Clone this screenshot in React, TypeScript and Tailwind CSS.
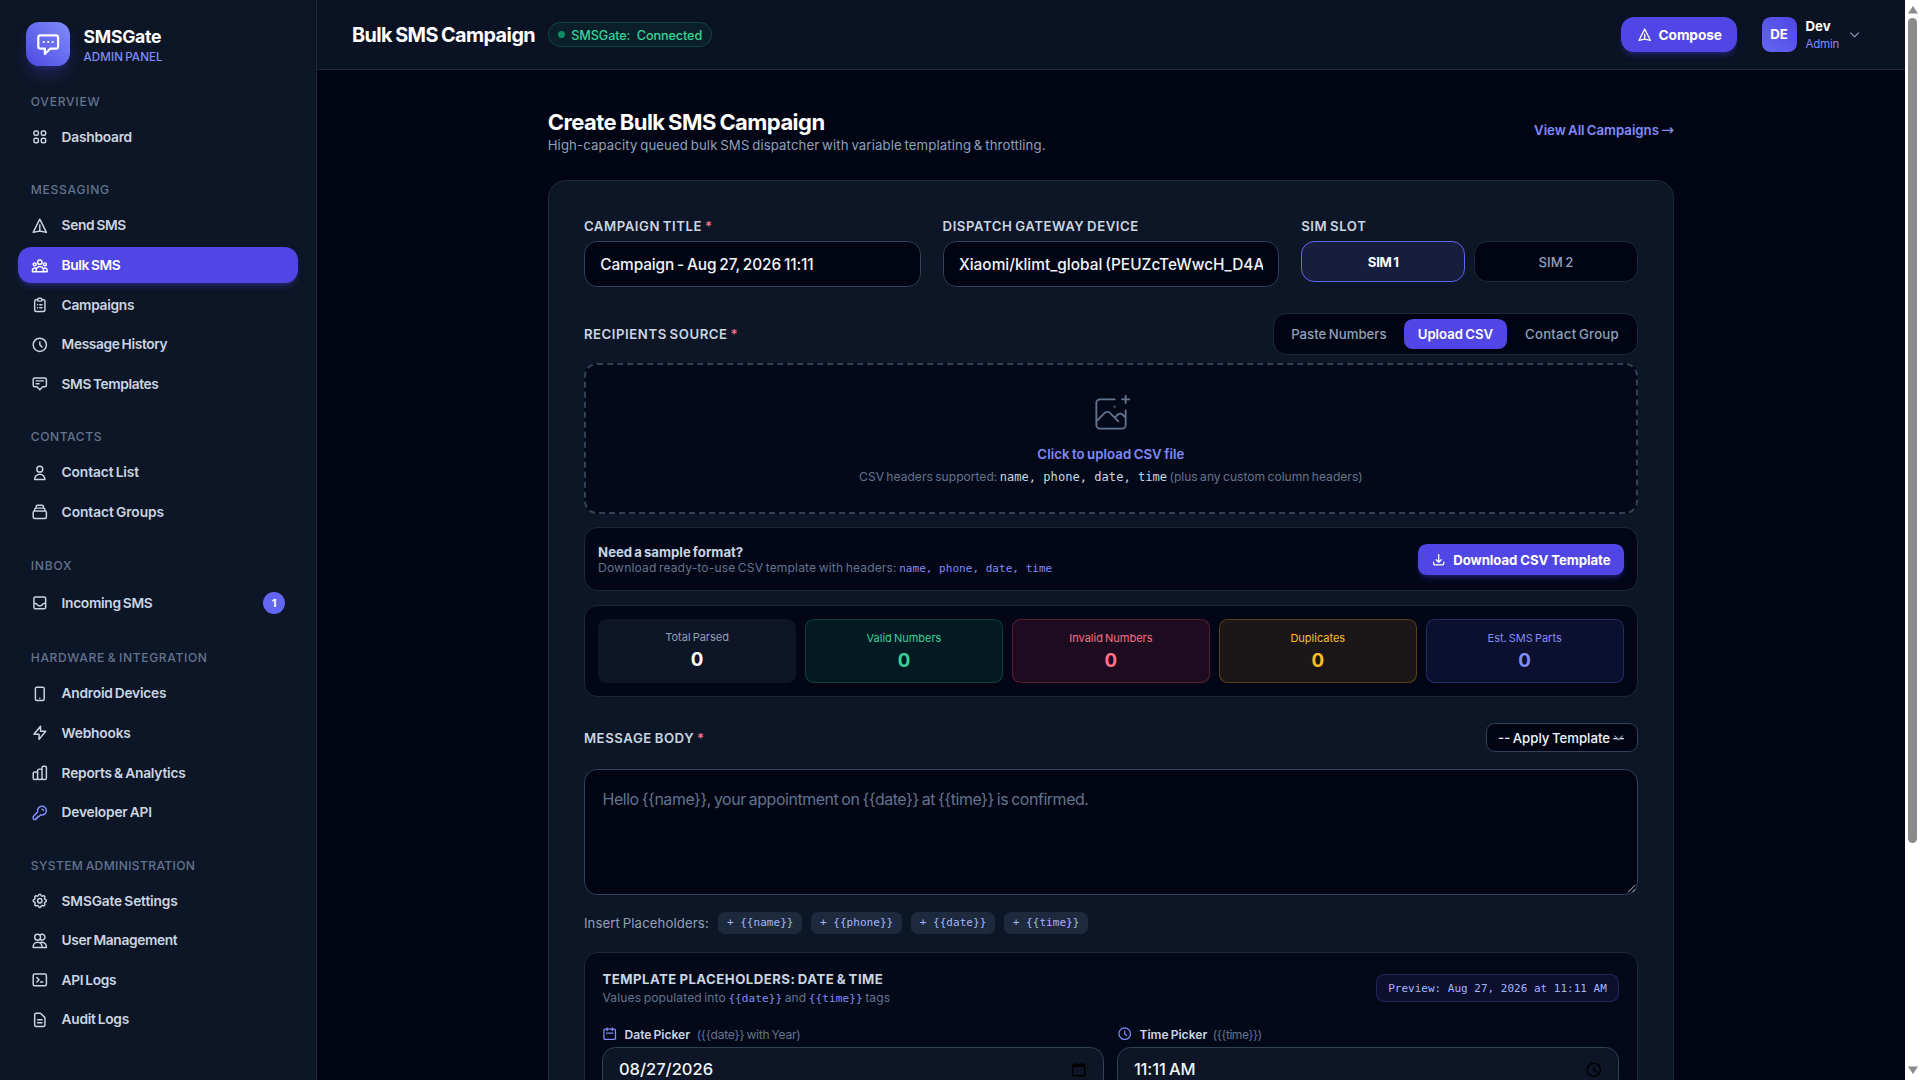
import type { ReactNode } from 'react'
import type { IconType } from 'react-icons'
import {
  HiOutlineAnnotation,
  HiOutlineCalendar,
  HiOutlineChartBar,
  HiOutlineChatAlt,
  HiOutlineChevronDown,
  HiOutlineClipboardList,
  HiOutlineClock,
  HiOutlineCog,
  HiOutlineCollection,
  HiOutlineDeviceMobile,
  HiOutlineDocumentText,
  HiOutlineDownload,
  HiOutlineInbox,
  HiOutlineKey,
  HiOutlineLightningBolt,
  HiOutlineTerminal,
  HiOutlineUser,
  HiOutlineUserGroup,
  HiOutlineUsers,
  HiOutlineViewGrid,
} from 'react-icons/hi'

function PlaneIcon({ className }: { className?: string }) {
  return (
    <svg className={className} fill="none" stroke="currentColor" strokeWidth={2} strokeLinecap="round" strokeLinejoin="round" viewBox="0 0 24 24">
      <path d="M12 19l9 2-9-18-9 18 9-2zm0 0v-8" />
    </svg>
  )
}

type Item = {
  label: string
  icon: IconType | typeof PlaneIcon
  track: string
  active?: boolean
  badge?: number
  tint?: string
}

const sections: { title: string; track: string; items: Item[] }[] = [
  {
    title: 'OVERVIEW',
    track: 'tracking-[0.67px]',
    items: [{ label: 'Dashboard', icon: HiOutlineViewGrid, track: 'tracking-[-0.22px]' }],
  },
  {
    title: 'MESSAGING',
    track: 'tracking-[0.65px]',
    items: [
      { label: 'Send SMS', icon: PlaneIcon, track: 'tracking-[-0.3px]' },
      { label: 'Bulk SMS', icon: HiOutlineUserGroup, track: 'tracking-[-0.35px]', active: true },
      { label: 'Campaigns', icon: HiOutlineClipboardList, track: 'tracking-[-0.25px]' },
      { label: 'Message History', icon: HiOutlineClock, track: 'tracking-[-0.33px]' },
      { label: 'SMS Templates', icon: HiOutlineAnnotation, track: 'tracking-[-0.35px]' },
    ],
  },
  {
    title: 'CONTACTS',
    track: 'tracking-[0.5px]',
    items: [
      { label: 'Contact List', icon: HiOutlineUser, track: 'tracking-[-0.1px]' },
      { label: 'Contact Groups', icon: HiOutlineCollection, track: 'tracking-[-0.06px]' },
    ],
  },
  {
    title: 'INBOX',
    track: 'tracking-[0.7px]',
    items: [{ label: 'Incoming SMS', icon: HiOutlineInbox, track: 'tracking-[-0.28px]', badge: 1 }],
  },
  {
    title: 'HARDWARE & INTEGRATION',
    track: 'tracking-[0.57px]',
    items: [
      { label: 'Android Devices', icon: HiOutlineDeviceMobile, track: 'tracking-[-0.22px]' },
      { label: 'Webhooks', icon: HiOutlineLightningBolt, track: 'tracking-[-0.16px]' },
      { label: 'Reports & Analytics', icon: HiOutlineChartBar, track: 'tracking-[-0.2px]' },
      { label: 'Developer API', icon: HiOutlineKey, track: 'tracking-[-0.19px]', tint: 'text-[#818cf8]' },
    ],
  },
  {
    title: 'SYSTEM ADMINISTRATION',
    track: 'tracking-[0.32px]',
    items: [
      { label: 'SMSGate Settings', icon: HiOutlineCog, track: 'tracking-[-0.14px]' },
      { label: 'User Management', icon: HiOutlineUsers, track: 'tracking-[-0.32px]' },
      { label: 'API Logs', icon: HiOutlineTerminal, track: 'tracking-[-0.3px]' },
      { label: 'Audit Logs', icon: HiOutlineDocumentText, track: 'tracking-[-0.25px]' },
    ],
  },
]

const stats = [
  { label: 'Total Parsed', box: 'bg-[#0d1526] pt-2', title: 'text-slate-400', value: 'text-white' },
  { label: 'Valid Numbers', box: 'border border-[#10b981]/25 bg-[#041a22] pt-2', title: 'text-[#34d399]', value: 'text-[#34d399]' },
  { label: 'Invalid Numbers', box: 'border border-[#f43f5e]/30 bg-[#1d0c20] pt-2', title: 'text-[#fb7185]', value: 'text-[#fb7185]' },
  { label: 'Duplicates', box: 'border border-[#f59e0b]/30 bg-[#1b1719] pt-2', title: 'text-[#fbbf24]', value: 'text-[#fbbf24]' },
  { label: 'Est. SMS Parts', box: 'border border-[#6366f1]/30 bg-[#0c102f] pt-2', title: 'text-[#818cf8]', value: 'text-[#818cf8]' },
]

const placeholders = ['name', 'phone', 'date', 'time']

const mono = "font-['DejaVu_Sans_Mono',monospace] [word-spacing:0]"

function Sidebar() {
  return (
    <aside className="w-72 shrink-0 border-r border-slate-800 bg-[#0d1626]">
      <div className="flex items-center gap-3 px-6 pt-5">
        <div className="flex size-10 items-center justify-center rounded-xl bg-linear-to-tr from-[#4f46e5] to-[#818cf8] shadow-lg shadow-[#4f46e5]/30">
          <HiOutlineChatAlt className="size-6 text-white" />
        </div>
        <div className="h-10 pt-[4px]">
          <div className="text-base/5 font-bold tracking-[-0.26px] text-white">SMSGate</div>
          <div className="mt-px text-[10.5px]/4 font-medium tracking-[0.1px] text-[#818cf8]">ADMIN PANEL</div>
        </div>
      </div>

      <nav className="flex flex-col gap-6 px-4 pt-[24.5px]">
        {sections.map((section) => (
          <div key={section.title}>
            <div className={`mb-[7.3px] px-3 text-[11px]/[16.7px] font-medium text-slate-500 ${section.track}`}>{section.title}</div>
            <div className="flex flex-col gap-[3.5px]">
              {section.items.map(({ label, icon: Icon, track, active, badge, tint }) => (
                <div
                  key={label}
                  className={`flex items-center gap-3 rounded-xl px-3 text-[12.5px] font-semibold ${badge ? 'h-[36.5px]' : 'h-[32.5px]'} ${
                    active ? 'bg-[#4f46e5] text-white shadow-md shadow-[#4f46e5]/30' : 'text-slate-300'
                  }`}
                >
                  <Icon className={`size-4 ${tint ?? ''}`} />
                  <span className={track}>{label}</span>
                  {badge && (
                    <span className="ml-auto flex size-5 items-center justify-center rounded-full bg-[#6366f1] text-[10px] font-bold text-white">
                      {badge}
                    </span>
                  )}
                </div>
              ))}
            </div>
          </div>
        ))}
      </nav>
    </aside>
  )
}

function Header() {
  return (
    <header className="flex h-16 shrink-0 items-center border-b border-slate-800 bg-[#0a1223] px-8">
      <h2 className="pt-0.5 text-lg font-bold tracking-[-0.5px] text-white">Bulk SMS Campaign</h2>
      <div className="ml-3 flex h-[23px] items-center rounded-full border border-[#10b981]/25 bg-[#0b1f2a] px-2 text-[11.5px] font-medium text-[#34d399]">
        <span className="mr-1.5 size-1.5 rounded-full bg-[#10b981]/70" />
        <span className="pt-[3px] tracking-[-0.1px] [word-spacing:0]">SMSGate:&nbsp; Connected</span>
      </div>
      <button className="ml-auto flex h-8 items-center gap-1.5 rounded-xl bg-[#4f46e5] px-3.5 text-[12.5px] font-bold text-white shadow-md shadow-[#4f46e5]/30">
        <PlaneIcon className="size-3.5" />
        <span className="pt-0.5 tracking-[-0.1px]">Compose</span>
      </button>
      <div className="mr-[7.5px] ml-[22px] flex items-center">
        <div className="flex size-8 items-center justify-center rounded-lg bg-linear-to-tr from-[#6366f1] to-[#4f46e5] pt-px text-xs font-bold text-white">DE</div>
        <div className="ml-2 w-[34px] pt-0.5">
          <div className="text-xs/4 font-bold text-white">Dev</div>
          <div className="text-[10.5px]/4 tracking-[-0.2px] text-[#818cf8]">Admin</div>
        </div>
        <HiOutlineChevronDown className="ml-[5px] size-3 text-slate-400" />
      </div>
    </header>
  )
}

function Label({ children, required }: { children: ReactNode; required?: boolean }) {
  return (
    <div className="h-4 pt-px text-xs/4 font-semibold tracking-[0.5px] text-slate-300">
      {children}
      {required && <span className="text-[#fb7185]"> *</span>}
    </div>
  )
}

function TopFields() {
  const field = 'mt-1.5 flex h-[41.8px] items-center rounded-xl border border-slate-700 bg-[#010413] px-3.5 pt-0.5 text-sm font-medium text-slate-100'
  return (
    <div className="grid grid-cols-3 gap-5">
      <div>
        <Label required>CAMPAIGN TITLE</Label>
        <div className={field}>
          <span className="tracking-[-0.1px]">Campaign - Aug 27, 2026 11:11</span>
        </div>
      </div>
      <div className="min-w-0">
        <Label>DISPATCH GATEWAY DEVICE</Label>
        <div className={field}>
          <span className="overflow-hidden whitespace-nowrap">Xiaomi/klimt_global (PEUZcTeWwcH_D4A</span>
        </div>
      </div>
      <div>
        <Label>SIM SLOT</Label>
        <div className="mt-1.5 grid grid-cols-2 gap-2 text-xs">
          <div className="flex h-[37.8px] items-center justify-center rounded-xl border border-[#6366f1] bg-[#171d3c] pt-0.5 font-bold tracking-[-0.3px] text-white">SIM 1</div>
          <div className="flex h-[37.8px] items-center justify-center rounded-xl border border-slate-800 bg-[#010413] pt-0.5 font-medium text-slate-400">SIM 2</div>
        </div>
      </div>
    </div>
  )
}

function Recipients() {
  return (
    <div className="mt-6">
      <div className="mb-2 flex items-center justify-between">
        <Label required>RECIPIENTS SOURCE</Label>
        <div className="flex h-[37.8px] items-center gap-1 rounded-xl border border-slate-800 bg-[#010413] p-1 text-xs font-medium text-slate-400">
          <span className="w-[110px] pt-0.5 text-center">Paste Numbers</span>
          <span className="flex h-[27.5px] w-[94px] items-center justify-center rounded-lg bg-[#4f46e5] pt-0.5 font-semibold text-white">Upload CSV</span>
          <span className="w-[110px] pt-0.5 text-center tracking-[0.2px]">Contact Group</span>
        </div>
      </div>

      <div className="flex h-[137px] flex-col items-center rounded-xl border-2 border-dashed border-slate-700 bg-[#040919] pt-6">
        <svg className="size-10 text-slate-500" fill="none" stroke="currentColor" strokeWidth={2} strokeLinecap="round" strokeLinejoin="round" viewBox="0 0 48 48">
          <path d="M28 8H12a4 4 0 00-4 4v20m32-12v8m0 0v8a4 4 0 01-4 4H12a4 4 0 01-4-4v-4m32-4l-3.172-3.172a4 4 0 00-5.656 0L28 28M8 32l9.172-9.172a4 4 0 015.656 0L28 28m0 0l4 4m4-24h8m-4-4v8m-12 4h.02" />
        </svg>
        <div className="mt-[8.5px] text-xs/[18px] font-semibold tracking-[0.08px] text-[#818cf8]">Click to upload CSV file</div>
        <div className="mt-[2.7px] text-[11px]/4 text-slate-500">
          CSV headers supported: <span className={`${mono} text-slate-300`}>name, phone, date, time</span> (plus any custom column headers)
        </div>
      </div>

      <div className="mt-3 flex h-[58.3px] items-center justify-between rounded-xl border border-slate-800 bg-[#020616] px-3">
        <div className="pt-px">
          <div className="text-xs/[15px] font-bold text-slate-300">Need a sample format?</div>
          <div className="text-[11px]/[14px] tracking-[0.12px] text-slate-500">
            Download ready-to-use CSV template with headers: <span className={`${mono} text-[10px] tracking-[0.03px] text-[#818cf8]`}>name, phone, date, time</span>
          </div>
        </div>
        <button className="flex h-7 items-center gap-1.5 rounded-lg bg-[#4f46e5] px-3 text-xs font-bold text-white shadow-md shadow-[#4f46e5]/30">
          <HiOutlineDownload className="size-3.5" />
          <span className="pt-0.5 tracking-[-0.07px]">Download CSV Template</span>
        </button>
      </div>

      <div className="mt-[12.5px] grid grid-cols-5 gap-2 rounded-xl border border-slate-800 bg-[#020616] p-3 text-center">
        {stats.map((s) => (
          <div key={s.label} className={`h-[57.5px] rounded-lg px-2 ${s.box}`}>
            <div className={`text-[10px]/[17px] ${s.title}`}>{s.label}</div>
            <div className={`text-[17px]/6 font-bold ${s.value}`}>0</div>
          </div>
        ))}
      </div>
    </div>
  )
}

function MessageBody() {
  return (
    <div className="mt-6">
      <div className="flex items-center justify-between">
        <Label required>MESSAGE BODY</Label>
        <div className="relative flex h-[26px] w-[138px] items-center rounded-lg border border-slate-700 bg-[#010413] px-2.5 pt-0.5 text-xs font-medium text-slate-100">
          <span className="whitespace-nowrap">-- Apply Template --</span>
          <HiOutlineChevronDown className="absolute top-[6px] right-[11px] size-3 text-slate-400" />
        </div>
      </div>
      <div className="relative mt-4 h-[113.8px] rounded-xl border border-slate-700 bg-[#010413] px-4 pt-[15px]">
        <p className="text-[14.5px]/6 tracking-[-0.4px] text-slate-500">{'Hello {{name}}, your appointment on {{date}} at {{time}} is confirmed.'}</p>
        <svg className="absolute right-px bottom-px size-2 text-slate-300" viewBox="0 0 8 8" stroke="currentColor" strokeWidth={0.8}>
          <path d="M1 7.5L7.5 1M5 7.5L7.5 5" />
        </svg>
      </div>
      <div className="mt-4 flex items-center gap-2 text-xs text-slate-400">
        <span className="w-[114px] pt-px tracking-[0.1px] whitespace-nowrap">Insert Placeholders:</span>
        {placeholders.map((p) => (
          <span key={p} className={`${mono} flex h-5 items-center rounded-md bg-slate-800 px-2 text-[10px] tracking-[0.04px] text-[#a5b4fc]`}>
            {`+ {{${p}}}`}
          </span>
        ))}
      </div>
    </div>
  )
}

function DateTime() {
  const field = 'mt-[3.7px] flex h-[41.5px] items-center justify-between rounded-xl border border-slate-700 bg-[#0d1526] px-3.5 pb-px text-[15px] font-medium text-slate-100'
  return (
    <div className="mt-[16.2px] rounded-xl border border-slate-800 bg-[#040919] p-4">
      <div className="flex h-8 items-center justify-between">
        <div className="pt-0.5">
          <div className="text-xs/4 font-bold tracking-[0.43px] text-slate-300">TEMPLATE PLACEHOLDERS: DATE &amp; TIME</div>
          <div className="text-[11px]/4 tracking-[0.1px] text-slate-500">
            Values populated into <span className={`${mono} text-[10px] text-[#818cf8]`}>{'{{date}}'}</span> and{' '}
            <span className={`${mono} text-[10px] text-[#818cf8]`}>{'{{time}}'}</span> tags
          </div>
        </div>
        <div className={`${mono} flex h-[26px] items-center rounded-lg border border-[#6366f1]/25 bg-[#0c102c] px-[10.5px] pt-0.5 text-[10px] text-[#a5b4fc]`}>
          Preview: Aug 27, 2026 at 11:11 AM
        </div>
      </div>
      <div className="mt-[17px] grid grid-cols-2 gap-3 text-[11px]/4 text-slate-500">
        <div>
          <div className="flex items-center">
            <HiOutlineCalendar className="size-3.5 text-[#818cf8]" />
            <span className="ml-1.5 pt-px font-semibold text-slate-300">Date Picker</span>
            <span className="ml-1.5 pt-px tracking-[-0.22px]">{'({{date}} with Year)'}</span>
          </div>
          <div className={field}>
            <span>08/27/2026</span>
            <svg className="mr-px size-3.5 text-black" viewBox="0 0 14 14" fill="none" stroke="currentColor" strokeWidth={1.4}>
              <path d="M1.5 2.5h11v10h-11z" />
              <path d="M1.5 3.5h11M3.5 1v2M10.5 1v2" strokeWidth={2} />
            </svg>
          </div>
        </div>
        <div>
          <div className="flex items-center">
            <HiOutlineClock className="size-3.5 text-[#818cf8]" />
            <span className="ml-1.5 pt-px font-semibold text-slate-300">Time Picker</span>
            <span className="ml-[5px] pt-px tracking-[-0.45px]">{'({{time}})'}</span>
          </div>
          <div className={field}>
            <span className="tracking-[-0.1px]">11:11 AM</span>
            <HiOutlineClock className="size-4 text-black" />
          </div>
        </div>
      </div>
    </div>
  )
}

function Scrollbar() {
  return (
    <div className="flex w-[15px] shrink-0 flex-col items-center bg-white py-1.5">
      <svg className="h-2 w-2.5 fill-[#8b8b8b]" viewBox="0 0 10 8">
        <path d="M5 0l5 7.5H0z" />
      </svg>
      <div className="mt-1 h-[825px] w-[9px] rounded-full bg-[#8b8b8b]" />
      <svg className="mt-auto h-2 w-2.5 fill-[#8b8b8b]" viewBox="0 0 10 8">
        <path d="M5 8L0 .5h10z" />
      </svg>
    </div>
  )
}

export default function App() {
  return (
    <div className="flex h-screen overflow-hidden bg-[#010413]">
      <div className="flex min-w-0 flex-1 font-[Inter,sans-serif] [word-spacing:-0.06em] [zoom:1.1]">
        <Sidebar />
        <div className="flex min-w-0 flex-1 flex-col">
          <Header />
          <main className="p-8">
            <div className="mx-auto max-w-5xl">
              <div className="flex h-11 items-center justify-between">
                <div className="pt-0.5">
                  <h1 className="text-xl/7 font-bold tracking-[-0.5px] text-white">Create Bulk SMS Campaign</h1>
                  <p className="text-xs/4 tracking-[0.1px] text-slate-400">High-capacity queued bulk SMS dispatcher with variable templating &amp; throttling.</p>
                </div>
                <a className="pt-0.5 text-xs/4 font-semibold text-[#818cf8]">
                  View All Campaigns <span className="font-['DejaVu_Sans',sans-serif] text-sm/4 font-normal">→</span>
                </a>
              </div>
              <div className="mt-6 rounded-2xl border border-slate-800 bg-[#0d1626] p-8">
                <TopFields />
                <Recipients />
                <MessageBody />
                <DateTime />
              </div>
            </div>
          </main>
        </div>
      </div>
      <Scrollbar />
    </div>
  )
}
